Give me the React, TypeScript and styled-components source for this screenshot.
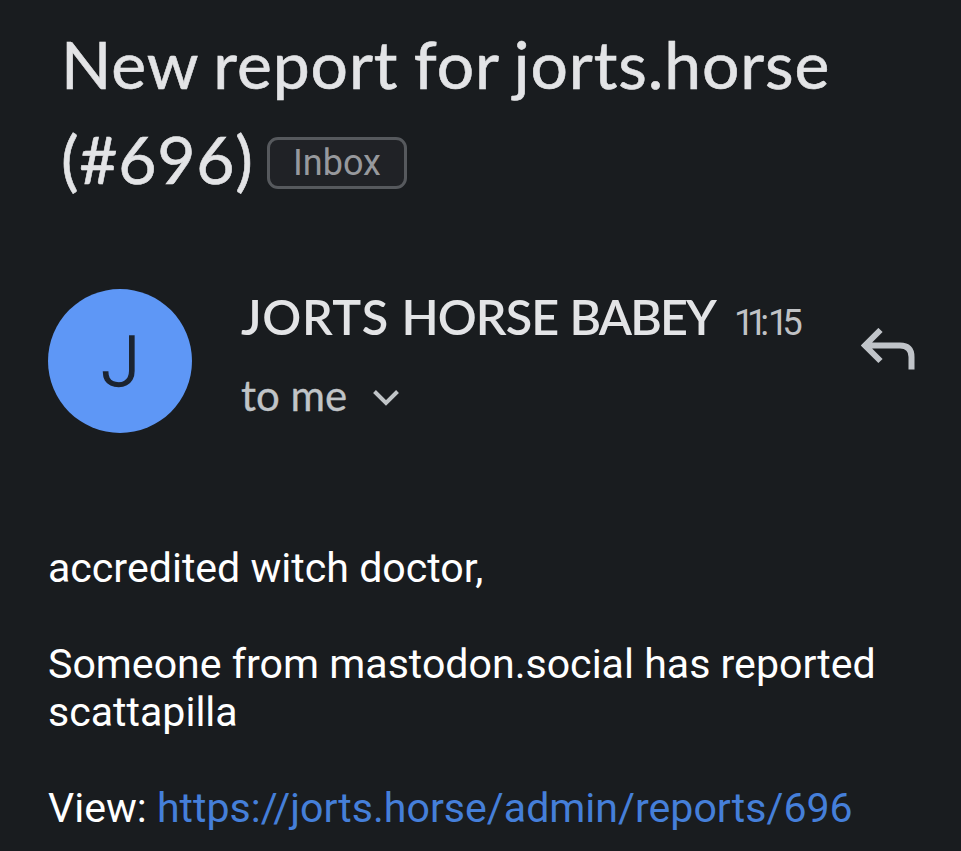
import React from "react";
import styled, { createGlobalStyle } from "styled-components";

const Global = createGlobalStyle`
  * { box-sizing: border-box; }
  body { margin: 0; background: #191c1f; }
`;

const Screen = styled.main`
  width: 961px;
  height: 851px;
  overflow: hidden;
  background: #191c1f;
  color: #e3e4e6;
  font-family: Roboto, sans-serif;
`;

const Subject = styled.header`
  height: 212px;
  padding: 16px 0 0 61px;
  font-family: Lato, sans-serif;
`;

const SubjectRow = styled.div`
  display: flex;
  align-items: center;
  height: 95px;
`;

const SubjectText = styled.span<{ $width: number; $spacing: number }>`
  width: ${(p) => p.$width}px;
  font-size: 66px;
  letter-spacing: ${(p) => p.$spacing}px;
  word-spacing: -2.5px;
  white-space: nowrap;
  -webkit-text-stroke: 0.6px currentColor;
`;

const Label = styled.span`
  width: 140px;
  height: 52px;
  margin: 9px 0 0 15px;
  border: 3px solid #56595d;
  border-radius: 11px;
  background: #202226;
  color: #97999d;
  font: 36px/46px Roboto, sans-serif;
  text-align: center;
`;

const Sender = styled.section`
  display: flex;
  padding: 77px 0 0 48px;
  height: 221px;
`;

const Avatar = styled.div`
  width: 144px;
  height: 144px;
  padding-left: 1px;
  border-radius: 50%;
  background: #5e97f6;
  color: #1c2430;
  font: 300 71px/145px Roboto, sans-serif;
  text-align: center;
  -webkit-text-stroke: 1.4px currentColor;
`;

const Details = styled.div`
  width: 669px;
  padding-left: 49px;
  font-family: Lato, sans-serif;
`;

const NameRow = styled.div`
  display: flex;
  align-items: baseline;
  height: 57px;
  line-height: 54px;
`;

const Name = styled.span`
  width: 493px;
  font-size: 48.5px;
  font-weight: 600;
  white-space: nowrap;
`;

const Spaced = styled.span<{ $spacing: number }>`
  letter-spacing: ${(p) => p.$spacing}px;
`;

const Time = styled.time`
  color: #c0c2c5;
  font: 36.5px Roboto, sans-serif;
  white-space: nowrap;
`;

const Recipient = styled.div`
  display: flex;
  align-items: center;
  margin-top: 24px;
  height: 50px;
  color: #c0c4c7;
  font-size: 42px;
  -webkit-text-stroke: 0.3px currentColor;
`;

const RecipientName = styled.span`
  width: 132px;
`;

const Chevron = styled.svg`
  width: 26px;
  height: 16px;
  margin-top: 5px;
`;

const Reply = styled.svg`
  width: 54px;
  height: 42px;
  margin-top: 39px;
`;

const Body = styled.article`
  padding: 111px 0 0 48px;
  color: #fff;
  font-size: 41.1px;
  line-height: 48px;
`;

const Paragraph = styled.p`
  margin: 0 0 48px;
  white-space: nowrap;
`;

const Link = styled.a`
  color: #457fd9;
  text-decoration: none;
`;

export default function App() {
  return (
    <Screen>
      <Global />
      <Subject>
        <SubjectRow>
          <SubjectText $width={800} $spacing={0.9}>New report for jorts.horse</SubjectText>
        </SubjectRow>
        <SubjectRow>
          <SubjectText $width={191} $spacing={0.7}>(#696)</SubjectText>
          <Label>Inbox</Label>
        </SubjectRow>
      </Subject>
      <Sender>
        <Avatar>J</Avatar>
        <Details>
          <NameRow>
            <Name>
              <Spaced $spacing={0.6}>JORTS </Spaced>
              <Spaced $spacing={-0.9}>HORSE </Spaced>
              <Spaced $spacing={-1.9}>BABEY</Spaced>
            </Name>
            <Time>
              <Spaced $spacing={-7.4}>11</Spaced>
              <Spaced $spacing={-1.2}>:</Spaced>
              <Spaced $spacing={-6.2}>15</Spaced>
            </Time>
          </NameRow>
          <Recipient>
            <RecipientName>to me</RecipientName>
            <Chevron viewBox="0 0 26 16" fill="none" stroke="#c0c4c7" strokeWidth="4">
              <path d="M1.5 1.5 13 13 24.5 1.5" />
            </Chevron>
          </Recipient>
        </Details>
        <Reply viewBox="0 0 54 42" fill="none" stroke="#c0c4c9" strokeWidth="6">
          <path d="M19.5 2 4 17.5 19.5 33M4 17.5H39Q50.500 17.5 50.5 29V41.5" />
        </Reply>
      </Sender>
      <Body>
        <Paragraph>accredited witch doctor,</Paragraph>
        <Paragraph>Someone from mastodon.social has reported<br />scattapilla</Paragraph>
        <Paragraph>View: <Link>https://jorts.horse/admin/reports/696</Link></Paragraph>
      </Body>
    </Screen>
  );
}
